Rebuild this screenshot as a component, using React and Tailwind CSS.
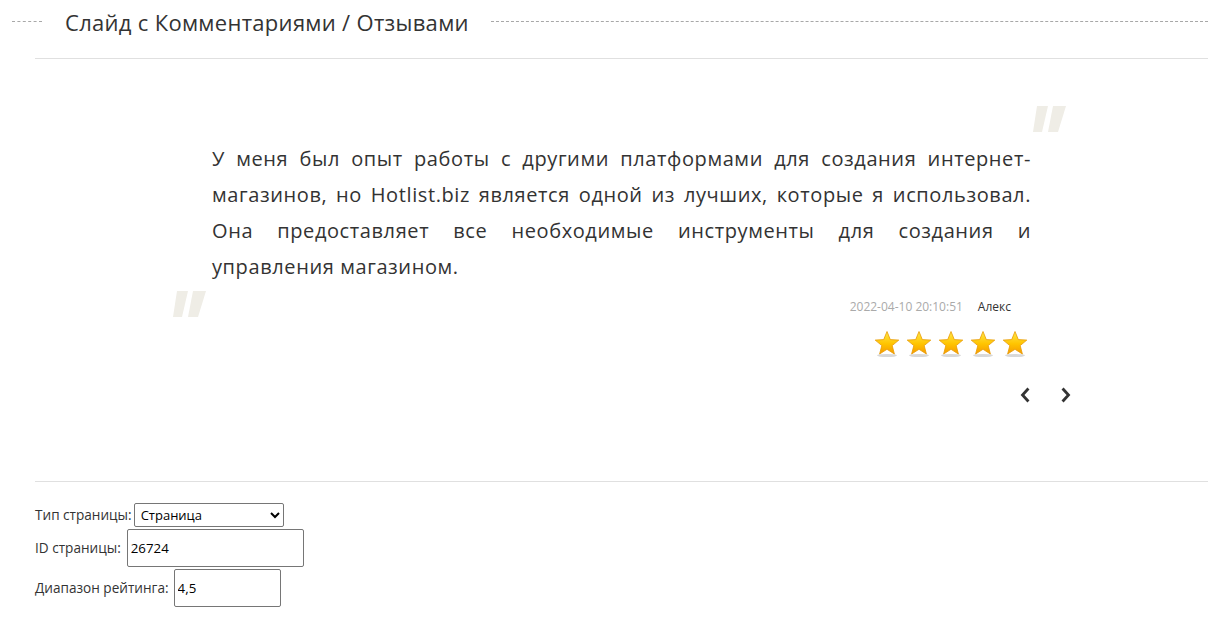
const REVIEW = {
  text: 'У меня был опыт работы с другими платформами для создания интернет-магазинов, но Hotlist.biz является одной из лучших, которые я использовал. Она предоставляет все необходимые инструменты для создания и управления магазином.',
  date: '2022-04-10 20:10:51',
  author: 'Алекс',
  rating: 5,
}

function QuoteMark({ className }) {
  return (
    <svg className={className} width="34" height="26" viewBox="0 0 34 26">
      <polygon points="4,0 15,0 9,26 0,26" fill="#efede6" />
      <polygon points="20,0 33,0 25,26 15,26" fill="#efede6" />
    </svg>
  )
}

function Star() {
  return (
    <svg width="28" height="28" viewBox="0 0 28 28">
      <defs>
        <linearGradient id="starFill" x1="0" y1="0" x2="0" y2="1">
          <stop offset="0" stopColor="#ffe94a" />
          <stop offset="0.55" stopColor="#ffc400" />
          <stop offset="1" stopColor="#f59a00" />
        </linearGradient>
      </defs>
      <ellipse cx="14" cy="25.5" rx="10" ry="1.6" fill="#d8d8d8" />
      <polygon
        points="14,1.5 17.3,9.6 25.8,10.1 19.2,15.6 21.4,24 14,19.3 6.6,24 8.8,15.6 2.2,10.1 10.7,9.6"
        fill="url(#starFill)"
        stroke="#e99a06"
        strokeWidth="0.8"
        strokeLinejoin="round"
      />
    </svg>
  )
}

function Chevron({ dir }) {
  return (
    <svg width="12" height="18" viewBox="0 0 12 18">
      <path
        d={dir === 'left' ? 'M8.5 3.5 L3.5 9 L8.5 14.5' : 'M3.5 3.5 L8.5 9 L3.5 14.5'}
        fill="none"
        stroke="#333"
        strokeWidth="2.8"
        strokeLinecap="square"
      />
    </svg>
  )
}

export default function App() {
  return (
    <div className="w-[1221px] h-[617px] bg-white text-[#333] font-['Open_Sans',sans-serif] pl-[12px] pr-[13px] overflow-hidden">
      <div className="flex items-center h-[58px] pb-[14px]">
        <div className="w-[30px] border-t border-dashed border-[#a8a8a8] mb-[2px]" />
        <h2 className="ml-[23px] mr-[22px] text-[22px] leading-[32px] tracking-[0.3px] font-normal whitespace-nowrap">
          Слайд с Комментариями / Отзывами
        </h2>
        <div className="flex-1 border-t border-dashed border-[#a8a8a8] mb-[2px]" />
      </div>

      <div className="ml-[23px] border-t border-[#e0e0e0]">
        <div className="relative pt-[82px] pb-[77px]">
          <QuoteMark className="absolute left-[998px] top-[47px]" />
          <QuoteMark className="absolute left-[138px] top-[232px]" />

          <div className="ml-[177px] w-[819px]">
            <p className="text-[20px] leading-[36px] tracking-[0.6px] text-justify text-[#333]">
              {REVIEW.text}
            </p>
            <div className="flex justify-end items-center gap-[15px] mt-[14px] pr-[20px] text-[12px] leading-[16px]">
              <span className="text-[#aaa]">{REVIEW.date}</span>
              <span className="text-[#333]">{REVIEW.author}</span>
            </div>
            <div className="flex justify-end gap-[4px] mt-[15px] pr-[2px]">
              {Array.from({ length: REVIEW.rating }).map((_, i) => (
                <Star key={i} />
              ))}
            </div>
          </div>
          <div className="ml-[177px] w-[860px] flex justify-end gap-[29px] mt-[28px]">
            <button className="w-[12px] h-[18px] flex items-center justify-center">
              <Chevron dir="left" />
            </button>
            <button className="w-[12px] h-[18px] flex items-center justify-center">
              <Chevron dir="right" />
            </button>
          </div>
        </div>

        <div className="border-t border-[#e0e0e0] pt-[21px] flex flex-col gap-[2px] text-[13.6px] text-[#333]">
          <div className="flex items-center h-[24px]">
            <span>Тип страницы:</span>
            <select className="ml-[2px] w-[150px] h-[24px] border border-[#767676] rounded-[2px] text-[13px] text-black px-[2px] bg-white" defaultValue="page">
              <option value="page">Страница</option>
            </select>
          </div>
          <div className="flex items-center h-[38px]">
            <span>ID страницы:</span>
            <input className="ml-[6px] w-[177px] h-[38px] border border-[#767676] rounded-[2px] px-[3px] text-[13.3px] text-black" defaultValue="26724" />
          </div>
          <div className="flex items-center h-[38px]">
            <span>Диапазон рейтинга:</span>
            <input className="ml-[5px] w-[107px] h-[38px] border border-[#767676] rounded-[2px] px-[3px] text-[13.3px] text-black" defaultValue="4,5" />
          </div>
        </div>
      </div>
    </div>
  )
}
